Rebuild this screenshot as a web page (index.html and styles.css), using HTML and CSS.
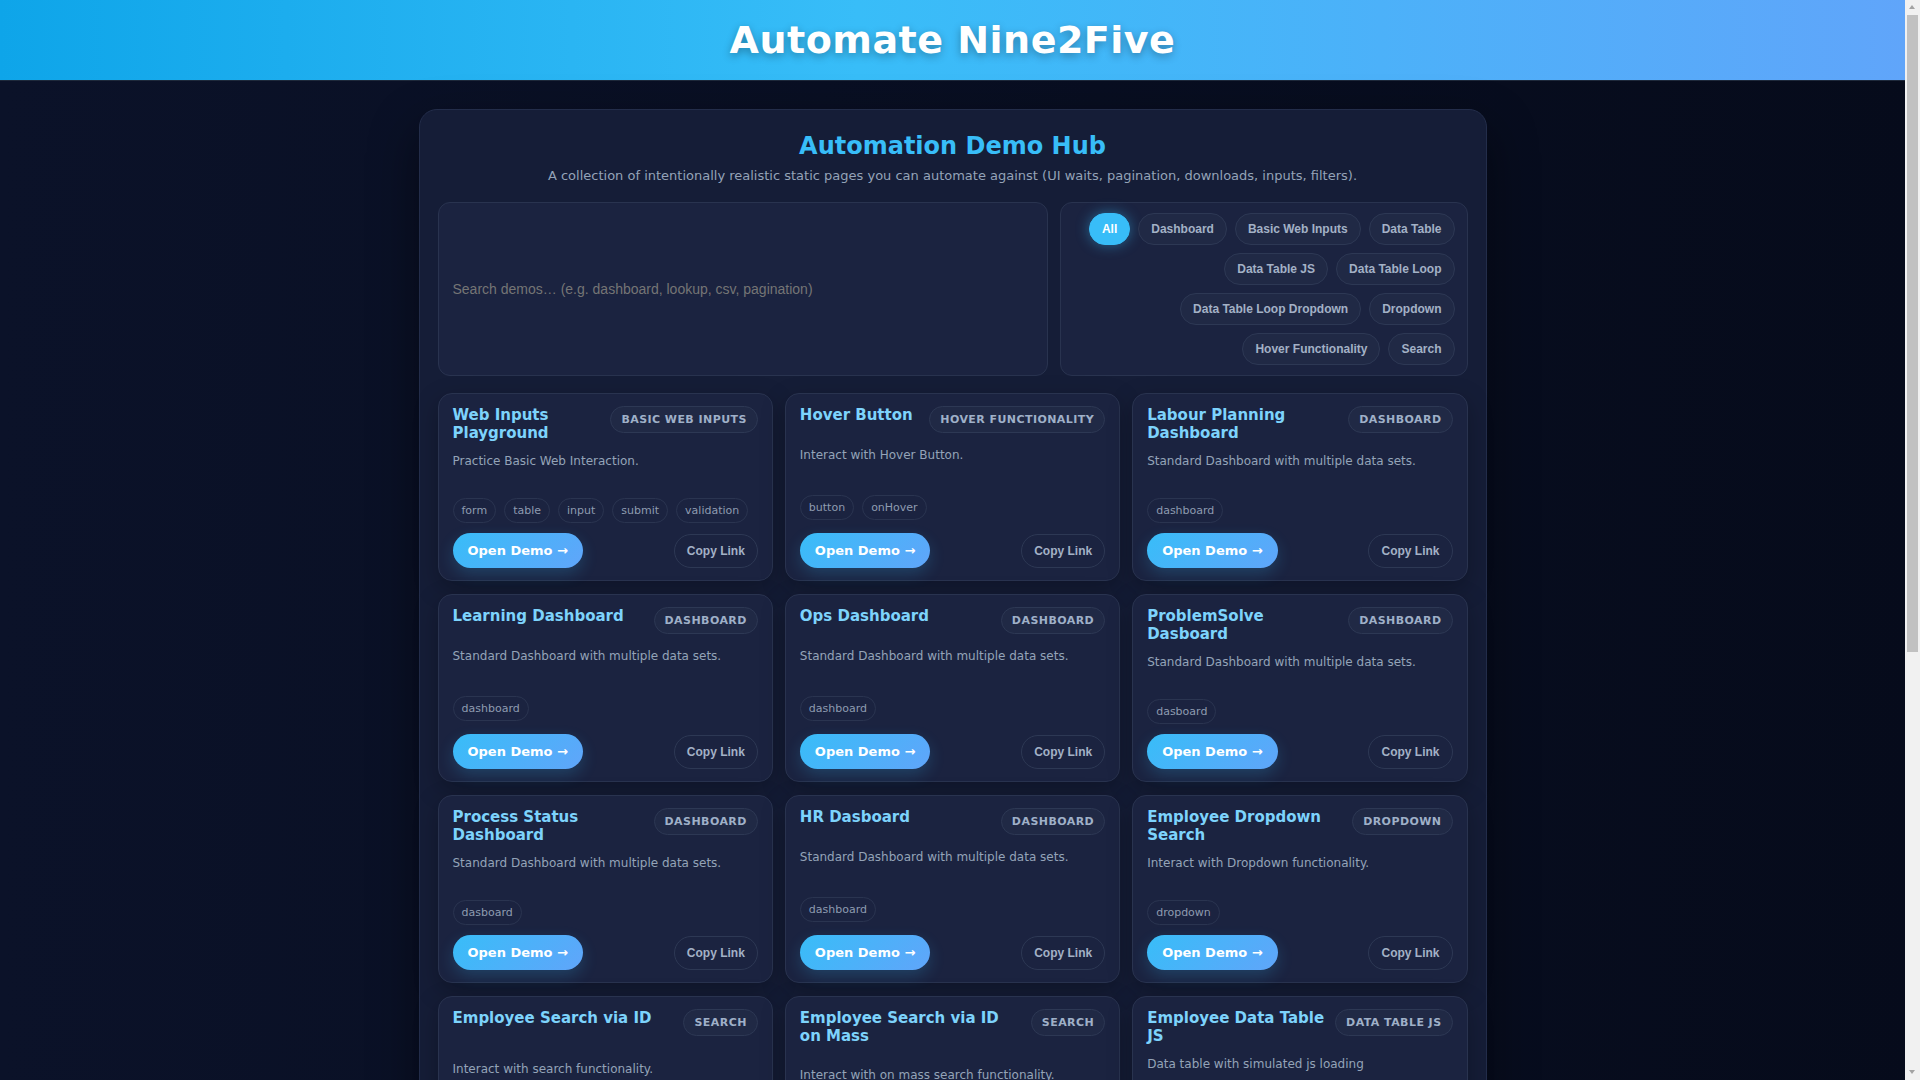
FILE: index.html
```html
<!DOCTYPE html>
<html lang="en">
<head>
    <meta charset="UTF-8">
    <meta name="viewport" content="width=device-width, initial-scale=1.0">
    <title>Automate Nine2Five</title>
    <link rel="stylesheet" href="styles.css">
</head>
<body>
    <header class="site-header">
        <h1>Automate Nine2Five</h1>
    </header>

    <main class="hub">
        <div class="hub-head">
            <h2>Automation Demo Hub</h2>
            <p>A collection of intentionally realistic static pages you can automate against (UI waits, pagination, downloads, inputs, filters).</p>
        </div>

        <div class="toolbar">
            <input type="text" class="search" id="search" placeholder="Search demos… (e.g. dashboard, lookup, csv, pagination)">
            <div class="filters">
                <button class="chip active">All</button>
                <button class="chip">Dashboard</button>
                <button class="chip">Basic Web Inputs</button>
                <button class="chip">Data Table</button>
                <button class="chip">Data Table JS</button>
                <button class="chip">Data Table Loop</button>
                <button class="chip">Data Table Loop Dropdown</button>
                <button class="chip">Dropdown</button>
                <button class="chip">Hover Functionality</button>
                <button class="chip">Search</button>
            </div>
        </div>

        <div class="cards">
            <div class="card">
                <div class="card-head">
                    <h3>Web Inputs Playground</h3>
                    <span class="badge">Basic Web Inputs</span>
                </div>
                <p class="card-desc">Practice Basic Web Interaction.</p>
                <div class="tags"><span>form</span><span>table</span><span>input</span><span>submit</span><span>validation</span></div>
                <div class="card-actions">
                    <a class="open-btn" href="#">Open Demo →</a>
                    <button class="copy-btn">Copy Link</button>
                </div>
            </div>

            <div class="card">
                <div class="card-head">
                    <h3>Hover Button</h3>
                    <span class="badge">Hover Functionality</span>
                </div>
                <p class="card-desc">Interact with Hover Button.</p>
                <div class="tags"><span>button</span><span>onHover</span></div>
                <div class="card-actions">
                    <a class="open-btn" href="#">Open Demo →</a>
                    <button class="copy-btn">Copy Link</button>
                </div>
            </div>

            <div class="card">
                <div class="card-head">
                    <h3>Labour Planning Dashboard</h3>
                    <span class="badge">Dashboard</span>
                </div>
                <p class="card-desc">Standard Dashboard with multiple data sets.</p>
                <div class="tags"><span>dashboard</span></div>
                <div class="card-actions">
                    <a class="open-btn" href="#">Open Demo →</a>
                    <button class="copy-btn">Copy Link</button>
                </div>
            </div>

            <div class="card">
                <div class="card-head">
                    <h3>Learning Dashboard</h3>
                    <span class="badge">Dashboard</span>
                </div>
                <p class="card-desc">Standard Dashboard with multiple data sets.</p>
                <div class="tags"><span>dashboard</span></div>
                <div class="card-actions">
                    <a class="open-btn" href="#">Open Demo →</a>
                    <button class="copy-btn">Copy Link</button>
                </div>
            </div>

            <div class="card">
                <div class="card-head">
                    <h3>Ops Dashboard</h3>
                    <span class="badge">Dashboard</span>
                </div>
                <p class="card-desc">Standard Dashboard with multiple data sets.</p>
                <div class="tags"><span>dashboard</span></div>
                <div class="card-actions">
                    <a class="open-btn" href="#">Open Demo →</a>
                    <button class="copy-btn">Copy Link</button>
                </div>
            </div>

            <div class="card">
                <div class="card-head">
                    <h3>ProblemSolve Dasboard</h3>
                    <span class="badge">Dashboard</span>
                </div>
                <p class="card-desc">Standard Dashboard with multiple data sets.</p>
                <div class="tags"><span>dasboard</span></div>
                <div class="card-actions">
                    <a class="open-btn" href="#">Open Demo →</a>
                    <button class="copy-btn">Copy Link</button>
                </div>
            </div>

            <div class="card">
                <div class="card-head">
                    <h3>Process Status Dashboard</h3>
                    <span class="badge">Dashboard</span>
                </div>
                <p class="card-desc">Standard Dashboard with multiple data sets.</p>
                <div class="tags"><span>dasboard</span></div>
                <div class="card-actions">
                    <a class="open-btn" href="#">Open Demo →</a>
                    <button class="copy-btn">Copy Link</button>
                </div>
            </div>

            <div class="card">
                <div class="card-head">
                    <h3>HR Dasboard</h3>
                    <span class="badge">Dashboard</span>
                </div>
                <p class="card-desc">Standard Dashboard with multiple data sets.</p>
                <div class="tags"><span>dashboard</span></div>
                <div class="card-actions">
                    <a class="open-btn" href="#">Open Demo →</a>
                    <button class="copy-btn">Copy Link</button>
                </div>
            </div>

            <div class="card">
                <div class="card-head">
                    <h3>Employee Dropdown Search</h3>
                    <span class="badge">Dropdown</span>
                </div>
                <p class="card-desc">Interact with Dropdown functionality.</p>
                <div class="tags"><span>dropdown</span></div>
                <div class="card-actions">
                    <a class="open-btn" href="#">Open Demo →</a>
                    <button class="copy-btn">Copy Link</button>
                </div>
            </div>

            <div class="card">
                <div class="card-head">
                    <h3>Employee Search via ID</h3>
                    <span class="badge">Search</span>
                </div>
                <p class="card-desc">Interact with search functionality.</p>
                <div class="tags"><span>search</span><span>input</span><span>lookup</span></div>
                <div class="card-actions">
                    <a class="open-btn" href="#">Open Demo →</a>
                    <button class="copy-btn">Copy Link</button>
                </div>
            </div>

            <div class="card">
                <div class="card-head">
                    <h3>Employee Search via ID on Mass</h3>
                    <span class="badge">Search</span>
                </div>
                <p class="card-desc">Interact with on mass search functionality.</p>
                <div class="tags"><span>search</span><span>bulk</span><span>csv</span></div>
                <div class="card-actions">
                    <a class="open-btn" href="#">Open Demo →</a>
                    <button class="copy-btn">Copy Link</button>
                </div>
            </div>

            <div class="card">
                <div class="card-head">
                    <h3>Employee Data Table JS</h3>
                    <span class="badge">Data Table JS</span>
                </div>
                <p class="card-desc">Data table with simulated js loading</p>
                <div class="tags"><span>table</span><span>js</span><span>loading</span><span>waits</span><span>pagination</span><span>sorting</span></div>
                <div class="card-actions">
                    <a class="open-btn" href="#">Open Demo →</a>
                    <button class="copy-btn">Copy Link</button>
                </div>
            </div>

            <div class="card">
                <div class="card-head">
                    <h3>Employee Data Table</h3>
                    <span class="badge">Data Table</span>
                </div>
                <p class="card-desc">Static employee table with pagination.</p>
                <div class="tags"><span>table</span><span>pagination</span></div>
                <div class="card-actions">
                    <a class="open-btn" href="#">Open Demo →</a>
                    <button class="copy-btn">Copy Link</button>
                </div>
            </div>

            <div class="card">
                <div class="card-head">
                    <h3>Employee Data Table Loop</h3>
                    <span class="badge">Data Table Loop</span>
                </div>
                <p class="card-desc">Loop through every page of a data table.</p>
                <div class="tags"><span>table</span><span>loop</span><span>pagination</span></div>
                <div class="card-actions">
                    <a class="open-btn" href="#">Open Demo →</a>
                    <button class="copy-btn">Copy Link</button>
                </div>
            </div>

            <div class="card">
                <div class="card-head">
                    <h3>Table Loop Dropdown</h3>
                    <span class="badge">Data Table Loop Dropdown</span>
                </div>
                <p class="card-desc">Loop through table pages using a page size dropdown.</p>
                <div class="tags"><span>table</span><span>loop</span><span>dropdown</span></div>
                <div class="card-actions">
                    <a class="open-btn" href="#">Open Demo →</a>
                    <button class="copy-btn">Copy Link</button>
                </div>
            </div>

            <div class="card">
                <div class="card-head">
                    <h3>Department Dropdown</h3>
                    <span class="badge">Dropdown</span>
                </div>
                <p class="card-desc">Select values from dependent dropdowns.</p>
                <div class="tags"><span>dropdown</span><span>select</span></div>
                <div class="card-actions">
                    <a class="open-btn" href="#">Open Demo →</a>
                    <button class="copy-btn">Copy Link</button>
                </div>
            </div>

            <div class="card">
                <div class="card-head">
                    <h3>Hover Menu</h3>
                    <span class="badge">Hover Functionality</span>
                </div>
                <p class="card-desc">Reveal hidden menu items on hover.</p>
                <div class="tags"><span>menu</span><span>onHover</span></div>
                <div class="card-actions">
                    <a class="open-btn" href="#">Open Demo →</a>
                    <button class="copy-btn">Copy Link</button>
                </div>
            </div>

            <div class="card">
                <div class="card-head">
                    <h3>CSV Download Report</h3>
                    <span class="badge">Dashboard</span>
                </div>
                <p class="card-desc">Filter a report and download it as csv.</p>
                <div class="tags"><span>csv</span><span>download</span><span>filters</span></div>
                <div class="card-actions">
                    <a class="open-btn" href="#">Open Demo →</a>
                    <button class="copy-btn">Copy Link</button>
                </div>
            </div>
        </div>
    </main>

    <div class="scrollbar" aria-hidden="true"><span class="scrollbar-thumb"></span></div>
</body>
</html>
```

FILE: styles.css
```css
* {
    box-sizing: border-box;
}
body {
    margin: 0;
    padding-right: 15px;
    font-family: "DejaVu Sans", sans-serif;
    background: linear-gradient(90deg, #0b1229, #060b1b);
    color: #e2e8f0;
}
.site-header {
    background: linear-gradient(90deg, #0ea5e9, #38bdf8 45%, #60a5fa);
    border-bottom: 1px solid #1e293b;
    padding: 18px 0;
    text-align: center;
}
.site-header h1 {
    margin: 0;
    font-size: 38px;
    letter-spacing: 0.5px;
    color: #fff;
    text-shadow: 0 3px 8px rgba(0, 0, 0, 0.3);
}
.hub {
    max-width: 1068px;
    margin: 28px auto 40px;
    padding: 22px 18px 18px;
    background: #151d37;
    border: 1px solid #232d4a;
    border-radius: 18px;
    box-shadow: 0 20px 50px rgba(0, 0, 0, 0.45);
}
.hub-head {
    text-align: center;
}
.hub-head h2 {
    margin: 0;
    font-size: 24px;
    color: #38bdf8;
}
.hub-head p {
    margin: 8px 0 0;
    font-size: 13px;
    color: #94a3b8;
}
.toolbar {
    display: grid;
    grid-template-columns: 1.5fr 1fr;
    gap: 12px;
    margin: 19px 0 17px;
}
.search {
    width: 100%;
    padding: 0 14px;
    font-family: "Liberation Sans", Arial, sans-serif;
    font-size: 14px;
    color: #e2e8f0;
    background: #1b2340;
    border: 1px solid #29334f;
    border-radius: 12px;
    outline: none;
}
.search::placeholder {
    color: #757575;
}
.filters {
    display: flex;
    flex-wrap: wrap;
    justify-content: flex-end;
    align-content: flex-start;
    gap: 8px;
    padding: 10px 12px;
    background: #1b2340;
    border: 1px solid #29334f;
    border-radius: 12px;
}
.chip {
    padding: 8px 12px;
    font-family: "Liberation Sans", Arial, sans-serif;
    font-size: 12px;
    line-height: 14px;
    font-weight: bold;
    color: #a3b1c6;
    background: #202945;
    border: 1px solid #2d3854;
    border-radius: 999px;
    cursor: pointer;
}
.chip.active {
    color: #fff;
    background: #38bdf8;
    border-color: #38bdf8;
    box-shadow: 0 0 14px rgba(56, 189, 248, 0.45);
}
.cards {
    display: grid;
    grid-template-columns: repeat(3, 1fr);
    gap: 13px 12px;
}
.card {
    display: flex;
    flex-direction: column;
    justify-content: space-between;
    gap: 10px;
    padding: 12px 14px;
    background: #1b2340;
    border: 1px solid #29334f;
    border-radius: 14px;
    box-shadow: 0 8px 24px rgba(0, 0, 0, 0.25);
}
.card-head {
    display: flex;
    justify-content: space-between;
    align-items: flex-start;
    gap: 10px;
}
.card-head h3 {
    margin: 0;
    font-size: 15px;
    line-height: 18px;
    color: #7dd3fc;
}
.badge {
    flex-shrink: 0;
    padding: 6px 10px;
    font-size: 11px;
    font-weight: bold;
    letter-spacing: 0.04em;
    text-transform: uppercase;
    color: #9fb0c8;
    background: #202945;
    border: 1px solid #2d3854;
    border-radius: 999px;
}
.card-desc {
    margin: 0;
    min-height: 36px;
    font-size: 12px;
    line-height: 18px;
    color: #94a3b8;
}
.tags {
    display: flex;
    flex-wrap: wrap;
    gap: 8px;
}
.tags span {
    padding: 5px 8px;
    font-size: 11px;
    color: #8e9bb0;
    border: 1px solid #2a3450;
    border-radius: 999px;
}
.card-actions {
    display: flex;
    justify-content: space-between;
    align-items: center;
}
.open-btn {
    padding: 10px 15px;
    font-size: 13px;
    font-weight: bold;
    color: #fff;
    text-decoration: none;
    background: linear-gradient(135deg, #38bdf8, #60a5fa);
    border-radius: 999px;
    box-shadow: 0 6px 16px rgba(56, 189, 248, 0.2);
}
.copy-btn {
    padding: 9px 12px;
    font-family: "Liberation Sans", Arial, sans-serif;
    font-size: 12px;
    font-weight: bold;
    color: #a3b1c6;
    background: transparent;
    border: 1px solid #2d3854;
    border-radius: 999px;
    cursor: pointer;
}

/* window scrollbar, drawn since the capture hides the native one */
.scrollbar {
    position: fixed;
    top: 0;
    right: 0;
    width: 15px;
    height: 100vh;
    background: #f1f1f1;
}
.scrollbar::before,
.scrollbar::after {
    content: "";
    position: absolute;
    left: 4px;
    border-left: 3.5px solid transparent;
    border-right: 3.5px solid transparent;
}
.scrollbar::before {
    top: 5px;
    border-bottom: 4px solid #a3a3a3;
}
.scrollbar::after {
    bottom: 6px;
    border-top: 4px solid #a3a3a3;
}
.scrollbar-thumb {
    position: absolute;
    top: 15px;
    left: 2px;
    right: 2px;
    height: 637px;
    background: #c1c1c1;
}
```
